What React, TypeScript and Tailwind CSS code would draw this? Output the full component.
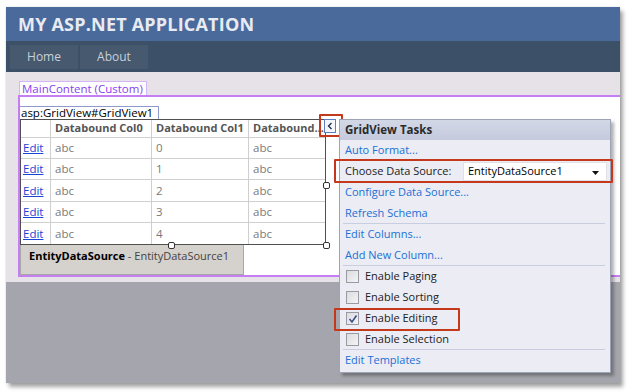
import React from "react";

const font = { fontFamily: '"Open Sans", "Noto Sans", sans-serif' };

function Chevron() {
  return (
    <svg width="6" height="8" viewBox="0 0 6 8">
      <path d="M4.5 1 L1.5 4 L4.5 7" fill="none" stroke="#1e2a44" strokeWidth="1.3" />
    </svg>
  );
}

function Handle({ cls }: { cls: string }) {
  return <div className={"absolute w-[7px] h-[7px] bg-white border border-[#333] rounded-[2px] " + cls} />;
}

function Checkbox({ checked }: { checked?: boolean }) {
  return (
    <div className="w-[13px] h-[13px] border border-[#9a9aa2] bg-gradient-to-br from-[#dcdce0] to-[#f4f4f6] flex items-center justify-center">
      {checked && (
        <svg width="10" height="10" viewBox="0 0 10 10">
          <path d="M1.5 5 L4 8 L8.5 1.5" fill="none" stroke="#3a4f86" strokeWidth="1.6" />
        </svg>
      )}
    </div>
  );
}

const rows = ["0", "1", "2", "3", "4"];
const rowH = ["h-[21px]", "h-[21px]", "h-[22px]", "h-[21px]", "h-[21px]"];

export default function App() {
  return (
    <div className="relative w-[629px] h-[392px] bg-white overflow-hidden pt-[7px] pl-[6px]" style={font}>
      <div className="w-[614px] h-[376px] flex flex-col overflow-hidden shadow-[3px_4px_4px_rgba(0,0,0,0.35),0_0_2px_rgba(0,0,0,0.15)]">
        <div className="h-[34px] bg-[#4a6a9c] flex items-center pl-[12px]">
          <span className="text-[18px] font-bold text-[#e8ebf2] tracking-[0.2px]">MY ASP.NET APPLICATION</span>
        </div>
        <div className="h-[31px] bg-[#3c5067] flex gap-[2px] pt-[4px] pl-[4px]">
          <div className="w-[68px] h-[24px] bg-[#46596e] flex items-center justify-center text-[12px] text-[#c8d0da]">Home</div>
          <div className="w-[68px] h-[24px] bg-[#46596e] flex items-center justify-center text-[12px] text-[#c8d0da]">About</div>
        </div>
        <div className="h-[210px] bg-[#e7e2e7] pt-[9px] pl-[12px]">
          <div className="ml-[1px] w-[128px] h-[14px] bg-white border border-[#d6b4f8] border-b-0 text-[11.5px] leading-[13px] text-[#8a3df0] pl-[2px]">
            MainContent (Custom)
          </div>
          <div className="w-[620px] h-[182px] border-2 border-[#c57ff2] border-r-0 bg-white pt-[9px]">
            <div className="ml-[-1px] w-[140px] h-[13px] border border-[#8d9acb] border-b-0 text-[11.5px] leading-[12px] text-black pl-[1px]">
              asp:GridView#GridView1
            </div>
            <div className="relative w-[306px] h-[126px] border border-[#505050] text-[11px]">
              <div className="flex h-[18px] border-b border-[#cfcfcf] font-bold text-[#555]">
                <div className="w-[30px] border-r border-[#cfcfcf]" />
                <div className="w-[101px] border-r border-[#cfcfcf] pl-[4px] flex items-center whitespace-nowrap">Databound Col0</div>
                <div className="w-[97px] border-r border-[#cfcfcf] pl-[4px] flex items-center whitespace-nowrap">Databound Col1</div>
                <div className="w-[76px] pl-[4px] flex items-center whitespace-nowrap">Databound...</div>
              </div>
              {rows.map((r, i) => (
                <div key={r} className={"flex text-[#7a7a7a] text-[11.5px] " + rowH[i] + (i < 4 ? " border-b border-[#cfcfcf]" : "")}>
                  <div className="w-[30px] border-r border-[#cfcfcf] pl-[2px] flex items-center">
                    <span className="text-[#1a44d4] underline">Edit</span>
                  </div>
                  <div className="w-[101px] border-r border-[#cfcfcf] pl-[4px] flex items-center">abc</div>
                  <div className="w-[97px] border-r border-[#cfcfcf] pl-[4px] flex items-center">{r}</div>
                  <div className="w-[76px] pl-[4px] flex items-center">abc</div>
                </div>
              ))}
              <Handle cls="right-[-5px] top-[62px]" />
              <Handle cls="left-[147px] bottom-[-5px]" />
              <Handle cls="right-[-5px] bottom-[-5px]" />
            </div>
            <div className="w-[224px] h-[30px] bg-[#d5d1cc] border border-t-0 border-[#a8a8a8] pl-[8px] pt-[3px] text-[11px] text-[#444]">
              <span className="font-bold text-black">EntityDataSource</span> - EntityDataSource1
            </div>
          </div>
        </div>
        <div className="flex-1 bg-[#a5a5ad]" />
      </div>

      {/* smart tag */}
      <div className="absolute left-[324px] top-[119px] w-[12px] h-[14px] border border-[#5b7fc2] bg-[#f4f6fb] flex items-center justify-center">
        <Chevron />
      </div>
      <div className="absolute left-[319px] top-[114px] w-[24px] h-[23px] border-2 border-[#c4381b] rounded-[1px]" />

      {/* tasks panel */}
      <div className="absolute left-[339px] top-[119px] w-[272px] h-[254px] bg-[#ebecf4] border border-[#9ea3b6] shadow-[3px_3px_3px_rgba(0,0,0,0.3)] text-[11px] flex flex-col">
        <div className="h-[20px] bg-gradient-to-b from-[#d3d8e7] to-[#c4cadd] pl-[5px] flex items-center font-bold text-[#2b2b2b] text-[11.5px]">GridView Tasks</div>
        <div className="h-[21px] pl-[5px] flex items-center text-[#2170d4]">Auto Format...</div>
        <div className="h-[21px] pl-[5px] flex items-center text-[#222]">
          <span className="w-[118px]">Choose Data Source:</span>
          <div className="w-[144px] h-[19px] bg-white border border-[#e0e0e6] flex items-center pl-[4px] text-black relative">
            EntityDataSource1
            <svg className="absolute right-[7px] top-[8px]" width="7" height="4" viewBox="0 0 7 4">
              <path d="M0 0 H7 L3.5 4 Z" fill="#111" />
            </svg>
          </div>
        </div>
        <div className="h-[21px] pl-[5px] flex items-center text-[#2170d4]">Configure Data Source...</div>
        <div className="h-[20px] pl-[5px] flex items-center text-[#2170d4]">Refresh Schema</div>
        <div className="h-[1px] ml-[3px] mr-[5px] bg-[#c9cde0]" />
        <div className="h-[21px] pl-[5px] flex items-center text-[#2170d4]">Edit Columns...</div>
        <div className="h-[20px] pl-[5px] flex items-center text-[#2170d4]">Add New Column...</div>
        <div className="h-[1px] ml-[3px] mr-[5px] bg-[#c9cde0]" />
        {["Enable Paging", "Enable Sorting", "Enable Editing", "Enable Selection"].map((t, i) => (
          <div key={t} className={(i === 3 ? "h-[20px]" : "h-[21px]") + " pl-[6px] flex items-center gap-[6px] text-[#222]"}>
            <Checkbox checked={i === 2} />
            <span>{t}</span>
          </div>
        ))}
        <div className="h-[1px] ml-[3px] mr-[5px] bg-[#c9cde0]" />
        <div className="h-[21px] pl-[5px] flex items-center text-[#2170d4]">Edit Templates</div>
      </div>
      <div className="absolute left-[334px] top-[159px] w-[279px] h-[24px] border-2 border-[#c4381b] rounded-[1px]" />
      <div className="absolute left-[334px] top-[308px] w-[126px] h-[23px] border-2 border-[#c4381b] rounded-[1px]" />
    </div>
  );
}
